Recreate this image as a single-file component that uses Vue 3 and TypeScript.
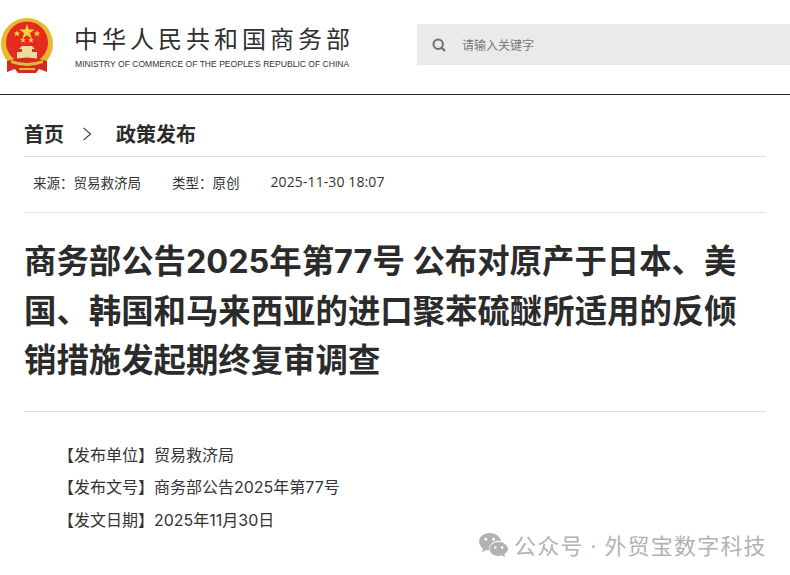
<template>
  <div class="page">
    <header class="site-header">
      <div class="brand">
        <svg class="emblem" viewBox="0 0 54 56" width="54" height="56">
          <circle cx="27" cy="26" r="26" fill="#e8b830" />
          <circle cx="27" cy="24.500" r="21" fill="#e32b1f" />
          <path d="M27 6 l1.900 5.600 5.900 0 -4.800 3.500 1.800 5.600 -4.800-3.500 -4.800 3.500 1.800-5.600 -4.800-3.500 5.900 0z" fill="#f6cf3a" />
          <path d="M17 12 l.9 2.400 2.500 0 -2 1.600 .8 2.400 -2.200-1.500 -2.200 1.500 .8-2.400 -2-1.600 2.500 0z" fill="#f6cf3a" />
          <path d="M37 12 l.9 2.400 2.500 0 -2 1.600 .8 2.400 -2.200-1.500 -2.200 1.500 .8-2.400 -2-1.600 2.500 0z" fill="#f6cf3a" />
          <path d="M23 19 l.8 2.200 2.200 0 -1.800 1.400 .7 2.200 -1.900-1.300 -1.900 1.300 .7-2.200 -1.800-1.400 2.200 0z" fill="#f6cf3a" />
          <path d="M31 19 l.8 2.200 2.200 0 -1.800 1.400 .7 2.200 -1.900-1.300 -1.900 1.300 .7-2.200 -1.800-1.400 2.200 0z" fill="#f6cf3a" />
          <path d="M22 28 h10 l3 3 h-3 v3 h5 v7 h-20 v-7 h5 v-3 h-3z" fill="#f4d9a0" />
          <path d="M7 43 Q27 36 47 43 L47 54 L39 51 L36 55 L18 55 L15 51 L7 54 Z" fill="#d22c20" />
          <path d="M11 42 Q27 48 43 42 L43 45 Q27 51 11 45 Z" fill="#e8b830" />
          <path d="M19 50 H35 V52 H19 Z" fill="#e8b830" />
        </svg>
        <div class="brand-text">
          <div class="brand-cn">中华人民共和国商务部</div>
          <div class="brand-en">MINISTRY OF COMMERCE OF THE PEOPLE'S REPUBLIC OF CHINA</div>
        </div>
      </div>
      <div class="search">
        <svg class="search-icon" viewBox="0 0 14 14" width="14" height="14">
          <circle cx="6.200" cy="6.200" r="4.700" fill="none" stroke="#6f6f6f" stroke-width="2" />
          <path d="M9.600 9.600 L13 13" stroke="#6f6f6f" stroke-width="2.200" />
        </svg>
        <span class="search-hint">请输入关键字</span>
      </div>
    </header>

    <main class="content">
      <nav class="crumbs">
        <span>首页</span>
        <svg class="crumb-sep" viewBox="0 0 10 16" width="10" height="14">
          <path d="M1 1 L9 8 L1 15" fill="none" stroke="#333" stroke-width="1.200" />
        </svg>
        <span>政策发布</span>
      </nav>

      <div class="meta">
        <span class="meta-source">来源：贸易救济局</span>
        <span class="meta-type">类型：原创</span>
        <span class="meta-date">{{ publishedAt }}</span>
      </div>

      <h1 class="title">商务部公告2025年第77号 公布对原产于日本、美国、韩国和马来西亚的进口聚苯硫醚所适用的反倾销措施发起期终复审调查</h1>

      <div class="fields">
        <p v-for="field in fields" :key="field">{{ field }}</p>
      </div>
    </main>

    <div class="watermark">
      <svg viewBox="0 0 32 26" width="31" height="25">
        <path d="M12 1 C5.500 1 1 5 1 10 C1 13 2.800 15.400 5 17 L4 21 L8.500 18.600 C9.500 18.900 10.500 19 11.500 19 C11 12.500 17 8 24 9.500 C22.800 4.500 18 1 12 1 Z" fill="#b2b2b2" />
        <path d="M21.500 10.500 C15.800 10.500 12 14 12 18 C12 22 15.800 25 21 25 C22.200 25 23.200 24.800 24.200 24.500 L28 26 L27.200 23 C29.600 21.600 31 20 31 18 C31 14 27 10.500 21.500 10.500 Z" fill="#b2b2b2" />
        <circle cx="8" cy="7.500" r="1.500" fill="#fff" />
        <circle cx="16" cy="7.500" r="1.500" fill="#fff" />
        <circle cx="18" cy="16" r="1.300" fill="#fff" />
        <circle cx="25" cy="16" r="1.300" fill="#fff" />
      </svg>
      <span>公众号 · 外贸宝数字科技</span>
    </div>
  </div>
</template>

<script setup lang="ts">
const publishedAt = '2025-11-30 18:07'

const fields: string[] = [
  '【发布单位】贸易救济局',
  '【发布文号】商务部公告2025年第77号',
  '【发文日期】2025年11月30日'
]
</script>

<style>
html, body {
  background: #fff;
  overflow: hidden;
}
</style>

<style scoped>
.page {
  position: relative;
  width: 790px;
  height: 575px;
  overflow: hidden;
  color: #2b2b2b;
  font-family: "Open Sans", "Noto Sans CJK SC", sans-serif;
}

.site-header {
  display: flex;
  align-items: flex-start;
  justify-content: space-between;
  height: 94px;
  border-bottom: 1px solid #2a2a2a;
}

.brand {
  display: flex;
  padding-top: 18px;
}

.emblem {
  display: block;
  margin-right: 20px;
}

.brand-text {
  padding-top: 5px;
}

.brand-cn {
  font-size: 24px;
  line-height: 32px;
  letter-spacing: 4px;
  color: #2f2f2f;
  white-space: nowrap;
}

.brand-en {
  margin: 3px 0 0 1px;
  font-family: "Liberation Sans", sans-serif;
  font-size: 8.570px;
  line-height: 12px;
  color: #333;
  white-space: nowrap;
}

.search {
  display: flex;
  align-items: center;
  width: 373px;
  height: 41px;
  margin-top: 24px;
  padding-left: 15px;
  box-sizing: border-box;
  background: #eaeaea;
}

.search-hint {
  margin-left: 16px;
  font-size: 12px;
  color: #777;
}

.content {
  padding: 0 24px;
}

.crumbs {
  display: flex;
  align-items: center;
  gap: 20px;
  height: 45px;
  padding-top: 16px;
  border-bottom: 1px solid #ddd;
  font-size: 20px;
  font-weight: 700;
  color: #2b2b2b;
}

.crumb-sep {
  margin: 0 4px 0 -2px;
}

.meta {
  display: flex;
  align-items: center;
  height: 49px;
  padding: 0 0 6px 9px;
  border-bottom: 1px solid #e2e2e2;
  font-size: 13.500px;
  color: #333;
}

.meta-source {
  margin-right: 31px;
}

.meta-type {
  margin-right: 31px;
}

.meta-date {
  font-size: 14px;
  letter-spacing: 0.100px;
}

.title {
  margin: 0;
  padding: 24px 0 25px;
  border-bottom: 1px solid #ddd;
  font-family: Inter, "Noto Sans CJK SC", sans-serif;
  font-size: 32.400px;
  line-height: 49.500px;
  font-weight: 700;
  color: #2b2b2b;
}

.fields {
  padding: 27px 0 0 34px;
  font-family: Inter, "Noto Sans CJK SC", sans-serif;
  font-size: 16px;
  color: #333;
}

.fields p {
  margin: 0;
  line-height: 32.500px;
}

.watermark {
  position: absolute;
  left: 478px;
  top: 528px;
  display: flex;
  align-items: center;
  gap: 5px;
  font-size: 22px;
  letter-spacing: 1.200px;
  color: #b2b2b2;
  white-space: nowrap;
}
</style>
